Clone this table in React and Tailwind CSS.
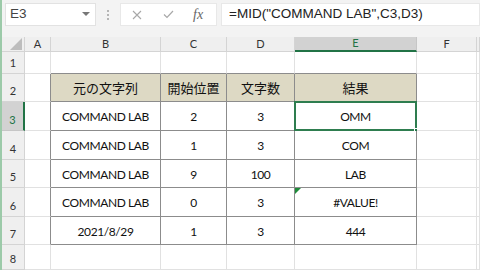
import React from "react"

const cols = [
  { key: "A", w: "w-[26px]" },
  { key: "B", w: "w-[110px]" },
  { key: "C", w: "w-[66px]" },
  { key: "D", w: "w-[68px]" },
  { key: "E", w: "w-[122px]" },
  { key: "F", w: "w-[60px]" },
  { key: "G", w: "flex-1" },
]

const rows = [
  { n: 1, h: "h-[22px]", cells: null },
  { n: 2, h: "h-[28px]", head: true, cells: ["元の文字列", "開始位置", "文字数", "結果"] },
  { n: 3, h: "h-[29px]", cells: ["COMMAND LAB", "2", "3", "OMM"] },
  { n: 4, h: "h-[29px]", cells: ["COMMAND LAB", "1", "3", "COM"] },
  { n: 5, h: "h-[28px]", cells: ["COMMAND LAB", "9", "100", "LAB"] },
  { n: 6, h: "h-[29px]", cells: ["COMMAND LAB", "0", "3", "#VALUE!"] },
  { n: 7, h: "h-[28px]", cells: ["2021/8/29", "1", "3", "444"] },
  { n: 8, h: "flex-1", cells: null },
]

const inTable = (r, ci) => r >= 2 && r <= 7 && ci >= 1 && ci <= 4

function Cell({ r, ci, col, row }) {
  // dark border where the table edge falls on this cell's right / bottom
  const darkRight = (r >= 2 && r <= 7 && ci >= 0 && ci <= 4)
  const darkBottom = (r >= 1 && r <= 7 && ci >= 1 && ci <= 4)
  const rightCls = darkRight ? "border-r-[#8c8c8c]" : "border-r-[#e1e1e1]"
  const bottomCls = darkBottom ? "border-b-[#8c8c8c]" : "border-b-[#e1e1e1]"
  const bg = r === 2 && inTable(r, ci) ? "bg-[#ddd9c4]" : "bg-white"
  const text = inTable(r, ci) ? row.cells[ci - 1] : ""
  const selected = r === 3 && col.key === "E"
  const flagged = r === 6 && col.key === "E"

  return (
    <div className={`${col.w} shrink-0 relative border-r border-b ${rightCls} ${bottomCls} ${bg} flex items-center justify-center pt-[2px]`}>
      <span className={row.head ? "text-[13px] text-[#111]" : "text-[12px] tracking-[-0.4px] text-[#111]"}>{text}</span>
      {selected && (
        <>
          <div className="absolute -left-px -top-px w-[123px] h-[30px] border-2 border-[#2e7d4f]" />
          <div className="absolute right-[-3px] bottom-[-3px] w-[5px] h-[5px] bg-[#217346] border border-white" />
        </>
      )}
      {flagged && (
        <svg className="absolute left-0 top-0" width="6" height="6" viewBox="0 0 6 6">
          <polygon points="0,0 6,0 0,6" fill="#1e8c3a" />
        </svg>
      )}
    </div>
  )
}

export default function App() {
  return (
    <div
      className="w-[480px] h-[270px] overflow-hidden bg-white flex"
      style={{ fontFamily: '"Lato", "Noto Sans CJK JP", sans-serif' }}
    >
      <div className="w-[2px] shrink-0 bg-[#9ccaa9]" />
      <div className="flex-1 flex flex-col min-w-0">
        {/* formula bar */}
        <div className="h-[37px] shrink-0 bg-[#f3f3f3] flex items-start pt-[3px] pl-[3px]">
          <div className="w-[91px] h-[23px] bg-white border border-[#e2e2e2] flex items-center justify-between pl-[4px] pr-[5px]">
            <span className="text-[13.5px] text-[#444]" style={{ fontFamily: '"Liberation Sans", sans-serif' }}>E3</span>
            <svg width="8" height="5" viewBox="0 0 8 5">
              <polygon points="0,0 8,0 4,4" fill="#777" />
            </svg>
          </div>
          <div className="ml-[11px] mt-[7px] flex flex-col gap-[2px]">
            <span className="w-[2px] h-[2px] bg-[#b5b5b5]" />
            <span className="w-[2px] h-[2px] bg-[#b5b5b5]" />
            <span className="w-[2px] h-[2px] bg-[#b5b5b5]" />
          </div>
          <div className="ml-[11px] w-[97px] h-[23px] bg-white border border-[#e8e8e8] flex items-center">
            <svg className="ml-[11px]" width="10" height="10" viewBox="0 0 10 10">
              <path d="M1 1 L9 9 M9 1 L1 9" stroke="#a8a8a8" strokeWidth="1.1" fill="none" />
            </svg>
            <svg className="ml-[21px]" width="11" height="9" viewBox="0 0 11 9">
              <path d="M1 4.5 L4 7.5 L10 1" stroke="#a8a8a8" strokeWidth="1.2" fill="none" />
            </svg>
            <span
              className="ml-[19px] text-[14px] italic text-[#666]"
              style={{ fontFamily: '"Liberation Serif", serif' }}
            >
              fx
            </span>
          </div>
          <div className="ml-[4px] flex-1 h-[23px] bg-white border border-[#e8e8e8] flex items-center pl-[7px]">
            <span className="text-[13.5px] text-[#222]" style={{ fontFamily: '"Liberation Sans", sans-serif' }}>
              =MID("COMMAND LAB",C3,D3)
            </span>
          </div>
        </div>

        {/* column headers */}
        <div className="h-[15px] shrink-0 flex bg-[#efefef] border-b border-[#d4d4d4]">
          <div className="w-[23px] shrink-0 relative border-r border-[#d4d4d4]">
            <svg className="absolute right-[2px] bottom-[1px]" width="12" height="12" viewBox="0 0 12 12">
              <polygon points="12,0 12,12 0,12" fill="#bdbdbd" />
            </svg>
          </div>
          {cols.map((c) =>
            c.key === "E" ? (
              <div key={c.key} className={`${c.w} shrink-0 -mb-px border-r border-[#c6c6c6] border-b-2 border-b-[#217346] bg-[#d2d2d2] flex items-center justify-center`}>
                <span className="text-[11px] text-[#217346]">{c.key}</span>
              </div>
            ) : (
              <div key={c.key} className={`${c.w} shrink-0 border-r border-[#d4d4d4] flex items-center justify-center`}>
                <span className="text-[11px] text-[#333]">{c.key === "G" ? "" : c.key}</span>
              </div>
            )
          )}
        </div>

        {/* rows */}
        {rows.map((row) => (
          <div key={row.n} className={`${row.h} shrink-0 flex`}>
            {row.n === 3 ? (
              <div className="w-[23px] shrink-0 bg-[#d2d2d2] border-r-2 border-[#217346] border-b border-b-[#c6c6c6] flex items-end justify-center pb-[2px]">
                <span className="text-[11px] text-[#217346]">{row.n}</span>
              </div>
            ) : (
              <div className="w-[23px] shrink-0 bg-[#efefef] border-r border-b border-[#d4d4d4] flex items-end justify-center pb-[2px]">
                <span className="text-[11px] text-[#333]">{row.n}</span>
              </div>
            )}
            {cols.map((c, ci) => (
              <Cell key={c.key} r={row.n} ci={ci} col={c} row={row} />
            ))}
          </div>
        ))}
      </div>
    </div>
  )
}
